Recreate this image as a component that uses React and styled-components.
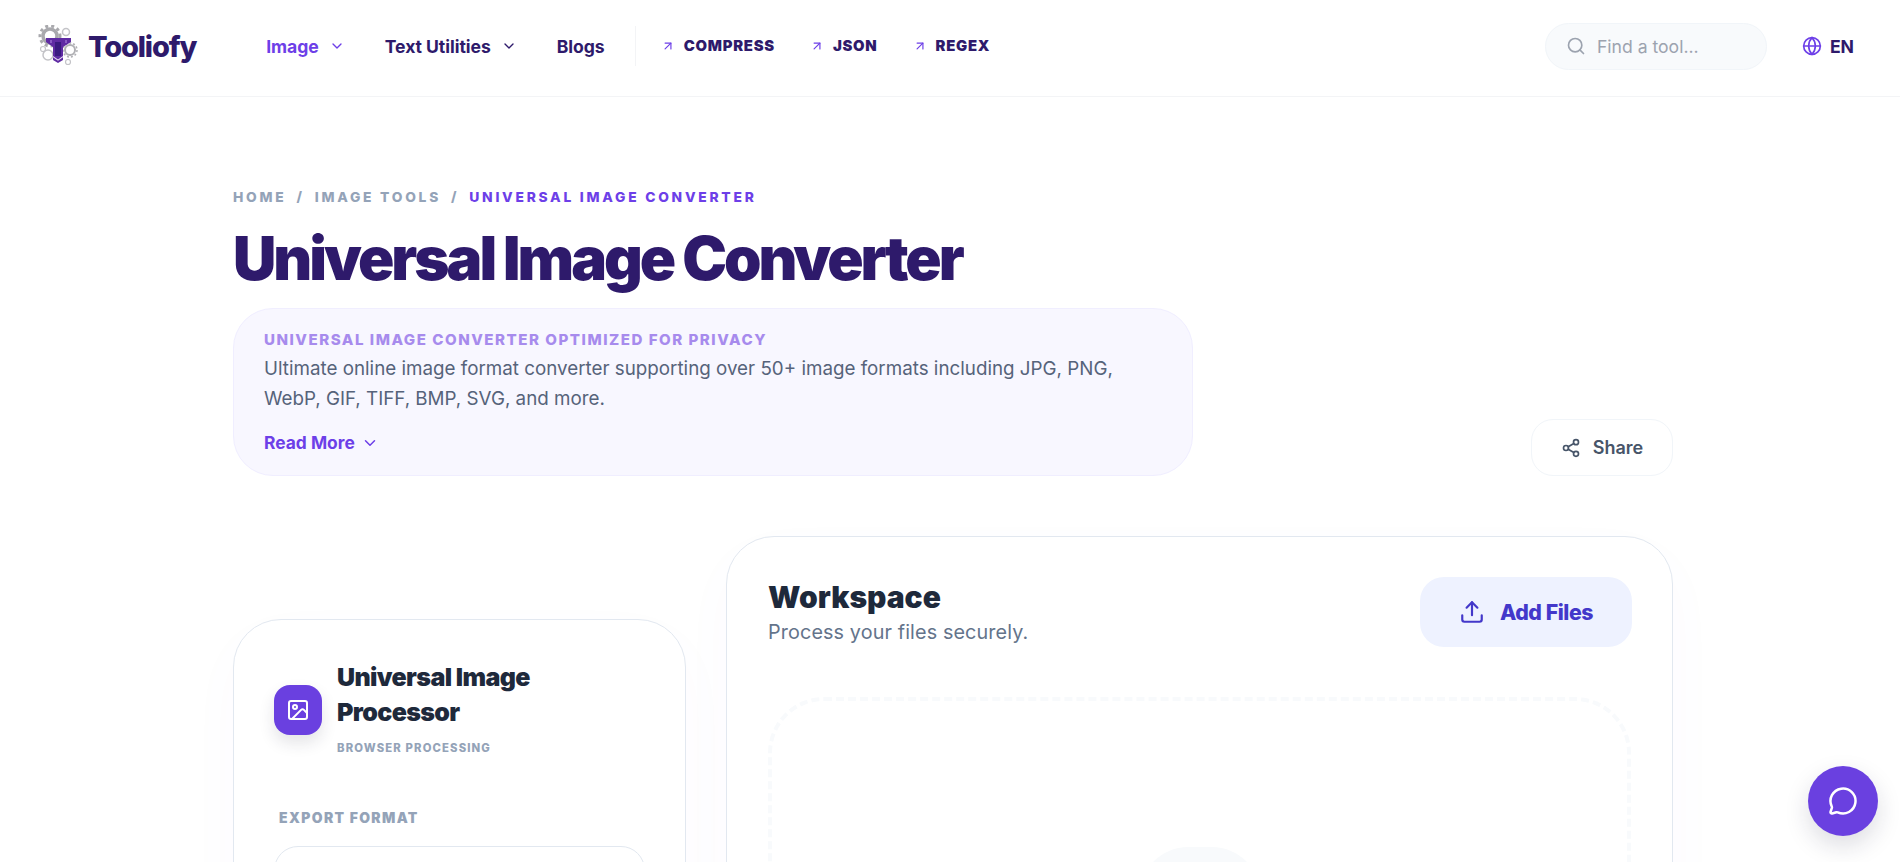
import React from 'react';
import styled, { createGlobalStyle } from 'styled-components';
import { ChevronDown, ArrowUpRight, Search, Globe, Share2, Image as ImageIcon, Upload, MessageCircle } from 'lucide-react';

const Global = createGlobalStyle`
  html, body { margin: 0; padding: 0; background: #fff; }
  body { font-family: Inter, "Noto Sans", sans-serif; overflow: hidden; }
  * { box-sizing: border-box; }
`;
const Page = styled.div`height: 862px; overflow: hidden; position: relative; background: #fff;`;
const Header = styled.header`
  height: 97px; border-bottom: 1px solid #f3f4f6; display: flex; align-items: center;
  padding: 0 40px 4px 38px;
`;
const Brand = styled.div`display: flex; align-items: center; gap: 10px; margin-right: 70px;`;
const BrandName = styled.span`font-size: 29px; font-weight: 800; letter-spacing: -0.04em; color: #2e1a6b;`;
const Nav = styled.nav`display: flex; align-items: center; gap: 40px;`;
const NavItem = styled.a`
  display: flex; align-items: center; gap: 10px; font-size: 17.6px; font-weight: 700; letter-spacing: -0.003em;
  color: ${p => (p.$active ? '#6d3fe8' : '#2e1a6b')};
`;
const Divider = styled.div`width: 1px; height: 40px; background: #f3f4f6; margin: 0 25px 0 30px;`;
const Quick = styled.div`display: flex; align-items: center; gap: 35px;`;
const QuickLink = styled.a`
  display: flex; align-items: center; gap: 9px; font-size: 14.85px; font-weight: 900;
  letter-spacing: 0.05em; color: #2e1a6b; svg { color: #6d3fe8; }
`;
const Right = styled.div`margin-left: auto; display: flex; align-items: center; gap: 35px; padding-right: 6px;`;
const SearchBox = styled.div`
  width: 222px; height: 47px; border-radius: 24px; background: #f8fafc; border: 1px solid #f1f5f9;
  display: flex; align-items: center; gap: 11px; padding: 0 20px; color: #9ca3af; font-size: 17.6px;
`;
const Lang = styled.div`display: flex; align-items: center; gap: 8px; font-size: 17.6px; font-weight: 700; color: #2e1a6b; svg { color: #6d3fe8; }`;
const Main = styled.main`width: 1440px; margin-left: 233px; padding-top: 92px;`;
const Crumbs = styled.div`
  display: flex; gap: 10px; font-size: 13.8px; line-height: 16px; font-weight: 800; letter-spacing: 0.2em; color: #94a3b8;
`;
const Crumb = styled.span`color: ${p => (p.$active ? '#6d3fe8' : '#94a3b8')};`;
const Title = styled.h1`
  margin: 20px 0 17px; font-size: 60px; line-height: 66px; font-weight: 900; letter-spacing: -0.05em; color: #2e1a6b;
`;
const HeroRow = styled.div`display: flex; justify-content: space-between; align-items: flex-end;`;
const Callout = styled.div`
  width: 960px; height: 168px; border-radius: 40px; background: #f8f7ff; border: 1px solid #f0eeff;
  padding: 21px 30px 0;
`;
const CalloutLabel = styled.div`font-size: 15.1px; line-height: 20px; font-weight: 800; letter-spacing: 0.1em; color: #a78bed;`;
const CalloutText = styled.p`margin: 4px 0 0; font-size: 18.8px; line-height: 30px; color: #56637a;`;
const ReadMore = styled.a`display: flex; align-items: center; gap: 6px; margin-top: 18px; font-size: 17.4px; font-weight: 700; color: #6d3fe8;`;
const ShareBtn = styled.button`
  width: 142px; height: 57px; border-radius: 22px; background: #fff; border: 1px solid #f1f5f9;
  display: flex; align-items: center; justify-content: center; gap: 12px;
  font: 600 18px Inter, sans-serif; color: #475569;
`;
const Work = styled.div`display: grid; grid-template-columns: 453px 947px; gap: 40px; margin-top: 60px;`;
const Card = styled.section`
  background: #fff; border: 1px solid #e2e8f0; border-radius: 48px; height: 700px;
  box-shadow: 0 20px 60px rgba(109, 63, 232, 0.025);
`;
const ToolCard = styled(Card)`margin-top: 83px; padding: 40px 40px 0;`;
const ToolHead = styled.div`display: flex; align-items: center; gap: 15px;`;
const ToolIcon = styled.div`
  width: 48px; height: 50px; flex: none; border-radius: 16px; background: #6a40e0; color: #fff; margin-top: 3px;
  display: flex; align-items: center; justify-content: center; box-shadow: 0 8px 16px rgba(30, 30, 60, 0.12);
`;
const ToolText = styled.div`width: 210px;`;
const ToolTitle = styled.div`font-size: 25px; line-height: 35px; font-weight: 900; letter-spacing: -0.025em; color: #1e293b;`;
const ToolSub = styled.div`margin-top: 10px; font-size: 11.3px; line-height: 16px; font-weight: 800; letter-spacing: 0.1em; color: #94a3b8;`;
const FieldLabel = styled.div`margin: 52px 0 0 5px; font-size: 13.9px; line-height: 20px; font-weight: 900; letter-spacing: 0.1em; color: #94a3b8;`;
const SelectBox = styled.div`margin-top: 18px; height: 60px; border: 1px solid #e2e8f0; border-radius: 24px;`;
const WorkCard = styled(Card)`padding: 40px 40px 0 41px;`;
const WorkHead = styled.div`display: flex; justify-content: space-between;`;
const WorkTitle = styled.div`margin-top: 1px; font-size: 30px; line-height: 38px; font-weight: 900; color: #1e293b;`;
const WorkSub = styled.div`margin-top: 2px; font-size: 19.8px; line-height: 28px; letter-spacing: 0.006em; color: #64748b;`;
const AddBtn = styled.button`
  width: 212px; height: 70px; border: 0; border-radius: 24px; background: #eef2ff; color: #4338ca;
  display: flex; align-items: center; justify-content: center; gap: 15px;
  font: 800 21.3px Inter, sans-serif; letter-spacing: -0.02em;
`;
const Drop = styled.div`
  margin: 50px 1px 0 0; height: 460px; border: 4px dashed #f8fafc; border-radius: 56px;
  display: flex; justify-content: center; padding-top: 146px;
`;
const DropTile = styled.div`width: 120px; height: 120px; border-radius: 48px; background: #f8fafc;`;
const Fab = styled.button`
  position: absolute; right: 22px; bottom: 26px; width: 70px; height: 70px; border: 0; border-radius: 50%;
  background: #6a40e0; color: #fff; display: flex; align-items: center; justify-content: center;
  box-shadow: 0 10px 25px rgba(30, 30, 60, 0.15);
`;

const Logo = () => (
  <svg width="40" height="42" viewBox="0 0 40 42" fill="none">
    <circle cx="12" cy="11" r="7" stroke="#a9a9ad" strokeWidth="3.5" />
    <circle cx="12" cy="11" r="10" stroke="#a9a9ad" strokeWidth="3" strokeDasharray="3 3" />
    <circle cx="28" cy="7" r="3.5" stroke="#c4c4c8" strokeWidth="1.5" />
    <circle cx="32" cy="25" r="5" stroke="#b0b0b4" strokeWidth="2" />
    <circle cx="32" cy="25" r="7" stroke="#b0b0b4" strokeWidth="1.5" strokeDasharray="2 2" />
    <circle cx="10" cy="30" r="5" stroke="#c4c4c8" strokeWidth="1.5" />
    <circle cx="5" cy="24" r="2.5" stroke="#c4c4c8" strokeWidth="1.2" />
    <circle cx="30" cy="37" r="2.5" stroke="#c4c4c8" strokeWidth="1.2" />
    <path d="M8 13h25v4l-8 5v13l-5 3-5-3V22l-7-5z" fill="#5f2ba3" />
    <path d="M12 15h2v3h-2zM27 15h2v3h-2z" fill="#8a5cc4" />
    <path d="M17 17h6v14h-6z" fill="#3a1a80" />
    <path d="M15 31l5 3.5 5-3.5v1.2l-5 3.5-5-3.5z" fill="#e9dff5" />
  </svg>
);

export default function App() {
  return (
    <Page>
      <Global />
      <Header>
        <Brand><Logo /><BrandName>Tooliofy</BrandName></Brand>
        <Nav>
          <NavItem $active>Image <ChevronDown size={16} /></NavItem>
          <NavItem>Text Utilities <ChevronDown size={16} /></NavItem>
          <NavItem>Blogs</NavItem>
        </Nav>
        <Divider />
        <Quick>
          <QuickLink><ArrowUpRight size={14} />COMPRESS</QuickLink>
          <QuickLink><ArrowUpRight size={14} />JSON</QuickLink>
          <QuickLink><ArrowUpRight size={14} />REGEX</QuickLink>
        </Quick>
        <Right>
          <SearchBox><Search size={20} />Find a tool...</SearchBox>
          <Lang><Globe size={20} />EN</Lang>
        </Right>
      </Header>
      <Main>
        <Crumbs>
          <Crumb>HOME</Crumb><Crumb>/</Crumb><Crumb>IMAGE TOOLS</Crumb><Crumb>/</Crumb>
          <Crumb $active>UNIVERSAL IMAGE CONVERTER</Crumb>
        </Crumbs>
        <Title>Universal Image Converter</Title>
        <HeroRow>
          <Callout>
            <CalloutLabel>UNIVERSAL IMAGE CONVERTER OPTIMIZED FOR PRIVACY</CalloutLabel>
            <CalloutText>Ultimate online image format converter supporting over 50+ image formats including JPG, PNG, WebP, GIF, TIFF, BMP, SVG, and more.</CalloutText>
            <ReadMore>Read More <ChevronDown size={18} /></ReadMore>
          </Callout>
          <ShareBtn><Share2 size={20} />Share</ShareBtn>
        </HeroRow>
        <Work>
          <ToolCard>
            <ToolHead>
              <ToolIcon><ImageIcon size={24} /></ToolIcon>
              <ToolText>
                <ToolTitle>Universal Image Processor</ToolTitle>
                <ToolSub>BROWSER PROCESSING</ToolSub>
              </ToolText>
            </ToolHead>
            <FieldLabel>EXPORT FORMAT</FieldLabel>
            <SelectBox />
          </ToolCard>
          <WorkCard>
            <WorkHead>
              <div>
                <WorkTitle>Workspace</WorkTitle>
                <WorkSub>Process your files securely.</WorkSub>
              </div>
              <AddBtn><Upload size={26} />Add Files</AddBtn>
            </WorkHead>
            <Drop><DropTile /></Drop>
          </WorkCard>
        </Work>
      </Main>
      <Fab><MessageCircle size={30} /></Fab>
    </Page>
  );
}
